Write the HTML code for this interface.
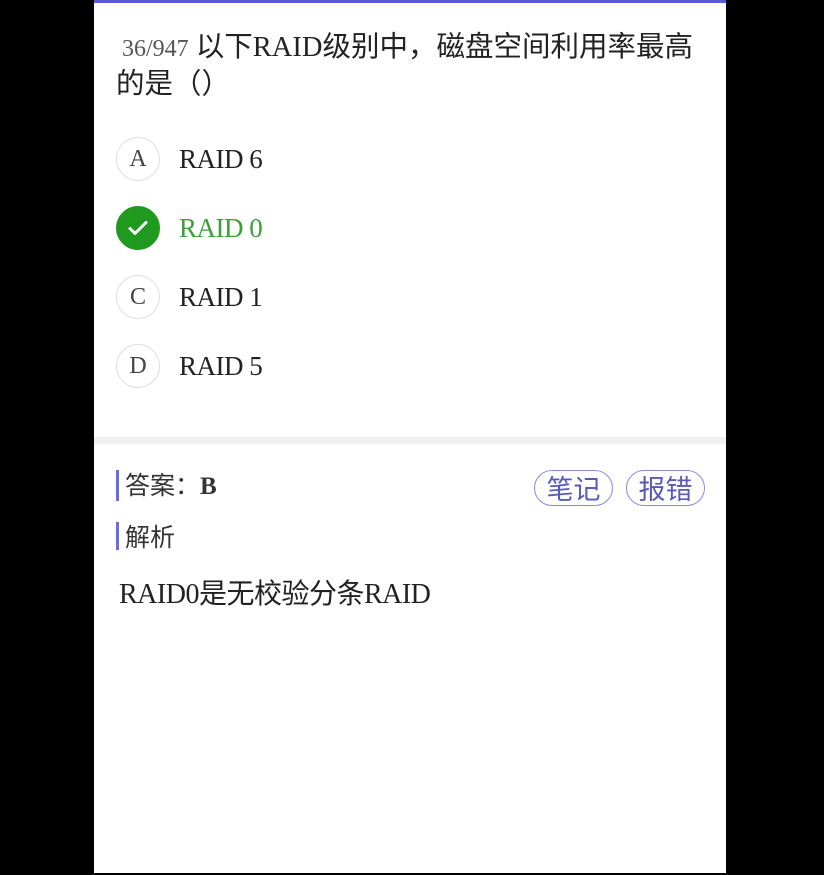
<!DOCTYPE html>
<html><head><meta charset="utf-8"><style>
body{margin:0;background:#000;width:824px;height:875px;position:relative;overflow:hidden;font-family:"Liberation Serif","Noto Sans CJK SC",serif;}
.p{position:absolute;left:94px;top:0;width:632px;height:873px;background:#fff;}
.top{position:absolute;left:0;top:0;width:632px;height:3px;background:#5a5ad8;}
.q{position:absolute;left:22px;top:30px;width:610px;font-size:28.5px;line-height:36px;color:#222;white-space:nowrap;letter-spacing:0}
.q .n{color:#555;font-size:24px;}
.o{position:absolute;left:22px;height:44px;display:flex;align-items:center;font-size:27px;color:#222;letter-spacing:-0.5px;}
.c{width:42px;height:42px;border:1px solid #ddd;border-radius:50%;display:flex;align-items:center;justify-content:center;font-size:24px;color:#444;margin-right:19px;letter-spacing:0}
.g{background:#1f9a1f;border-color:#1f9a1f;}
.div{position:absolute;left:0;top:437px;width:632px;height:7px;background:#f0f0f0;}
.h{position:absolute;left:22px;font-size:25px;color:#333;border-left:3px solid #6b6be0;padding-left:6px;line-height:28px;font-family:"Noto Sans CJK SC",sans-serif;}
.b{position:absolute;top:470px;height:34px;width:77px;text-align:center;border:1.5px solid #8b8be0;border-radius:18px;color:#5a5ab8;font-size:27px;line-height:34px;font-family:"Noto Sans CJK SC",sans-serif;}
</style></head><body><div class="p">
<div class="top"></div>
<div class="q"><span class="n">&nbsp;36/947</span> 以下RAID级别中，磁盘空间利用率最高<br>的是（）</div>
<div class="o" style="top:137px"><div class="c">A</div>RAID 6</div>
<div class="o" style="top:206px;color:#3aa03a"><div class="c g"><svg width="24" height="24" viewBox="0 0 24 24"><path d="M4 12.5l5 5 11-11" stroke="#fff" stroke-width="3" fill="none" stroke-linecap="round" stroke-linejoin="round"/></svg></div>RAID 0</div>
<div class="o" style="top:275px"><div class="c">C</div>RAID 1</div>
<div class="o" style="top:344px"><div class="c">D</div>RAID 5</div>
<div class="div"></div>
<div class="h" style="top:470px">答案：<b style="font-family:'Liberation Serif',serif">B</b></div>
<div class="b" style="left:440px">笔记</div>
<div class="b" style="left:532px">报错</div>
<div class="h" style="top:522px">解析</div>
<div style="position:absolute;left:25px;top:572px;font-size:28px;color:#222;letter-spacing:-0.5px">RAID0是无校验分条RAID</div>
</div></body></html>
